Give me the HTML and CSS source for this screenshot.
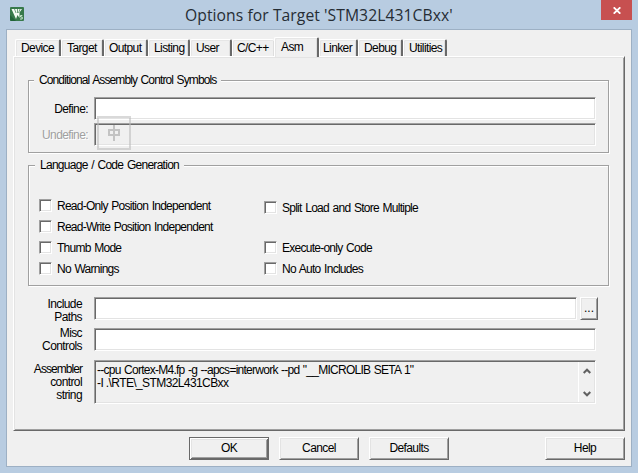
FILE: index.html
```html
<!DOCTYPE html>
<html lang="en">
<head>
<meta charset="utf-8">
<title>Options for Target</title>
<link rel="stylesheet" href="styles.css">
</head>
<body>
<div class="window">
  <header class="titlebar">
    <svg class="app-icon" width="14" height="14" viewBox="0 0 14 14"><rect width="14" height="14" rx="1" fill="#37794a"/><path d="M0 8L6 14H1L0 13Z" fill="#216338"/><path d="M1.5 2H12L9.5 5.5V11L7.5 8L6 12Z" fill="#f4fbf4"/><path d="M4.5 2L6 6M7.5 2V6M10 2L8.5 6" stroke="#37794a" stroke-width=".7"/><path d="M12.3 8.5H10.5V10H12.2V12H10" fill="none" stroke="#c9e7cd"/></svg>
    <h1>Options for Target 'STM32L431CBxx'</h1>
    <button class="close" aria-label="Close"><svg width="8" height="7" viewBox="0 0 8 7"><path d="M.7 .3L7.3 6.7M7.3 .3L.7 6.7" stroke="#fff" stroke-width="1.8"/></svg></button>
  </header>
  <main class="client">
    <nav class="tabs">
      <span class="tab device">Device</span><span class="tab target">Target</span><span class="tab output">Output</span><span class="tab listing">Listing</span><span class="tab user">User</span><span class="tab cpp">C/C++</span><span class="tab active">Asm</span><span class="tab linker">Linker</span><span class="tab debug">Debug</span><span class="tab utilities">Utilities</span>
    </nav>
    <section class="page">
      <fieldset class="group symbols">
        <legend>Conditional Assembly Control Symbols</legend>
        <div class="symbol-row"><label>Define:</label><div class="field"></div></div>
        <div class="symbol-row disabled"><label>Undefine:</label><div class="field"></div></div>
        <div class="ime"><svg width="14" height="18" viewBox="0 0 14 18"><path d="M2 6H12V11H2ZM7 1V17" fill="none" stroke="#c3c3c3" stroke-width="2"/></svg></div>
      </fieldset>
      <fieldset class="group language">
        <legend>Language / Code Generation</legend>
        <div class="checks">
          <div class="check"><i></i><span>Read-Only Position Independent</span></div>
          <div class="check split"><i></i><span>Split Load and Store Multiple</span></div>
          <div class="check wide"><i></i><span>Read-Write Position Independent</span></div>
          <div class="check"><i></i><span>Thumb Mode</span></div>
          <div class="check"><i></i><span>Execute-only Code</span></div>
          <div class="check"><i></i><span>No Warnings</span></div>
          <div class="check"><i></i><span>No Auto Includes</span></div>
        </div>
      </fieldset>
      <div class="row include"><label>Include<br>Paths</label><div class="field"></div><button class="button browse">...</button></div>
      <div class="row misc"><label>Misc<br>Controls</label><div class="field"></div></div>
      <div class="row assembler"><label><span class="tight">Assembler</span><br>control<br>string</label>
        <div class="field output-box"><div class="command"><div class="line1">--cpu Cortex-M4.fp -g --apcs=interwork --pd "__MICROLIB SETA 1"</div><div class="line2">-I .\RTE\_STM32L431CBxx</div></div>
          <div class="scroll"><svg width="8" height="6" viewBox="0 0 8 6"><path d="M.7 5L4 1.7L7.3 5" fill="none" stroke="#606060" stroke-width="2"/></svg><svg width="8" height="6" viewBox="0 0 8 6"><path d="M.7 1L4 4.3L7.3 1" fill="none" stroke="#606060" stroke-width="2"/></svg></div>
        </div>
      </div>
    </section>
    <footer class="actions">
      <button class="button default">OK</button><button class="button">Cancel</button><button class="button">Defaults</button><button class="button help">Help</button>
    </footer>
  </main>
</div>
</body>
</html>
```
FILE: styles.css
```css
* { box-sizing: border-box; }
body { margin: 0; background: #b8cce1; color: #000; font: 12px/13px "Liberation Sans", Arial, sans-serif; letter-spacing: -.6px; overflow: hidden; }
.window { width: 638px; height: 473px; padding: 0 6px 6px; }
.titlebar { height: 29px; display: flex; align-items: flex-start; }
.app-icon { margin: 7px 0 0 4px; flex: none; }
h1 { margin: 5px 0 0 161px; font: 15.7px/20px "Open Sans", sans-serif; letter-spacing: .06px; white-space: nowrap; color: #262d34; width: 300px; }
.close { margin-left: auto; margin-right: 0; width: 31px; height: 20px; background: #c75050; border: 0; padding: 0; display: grid; place-items: center; flex: none; }
.client { width: 626px; height: 438px; background: #f0f0f0; border: 1px solid #9db0c4; padding: 7px 6px 0; }
.tabs { height: 19px; display: flex; align-items: flex-end; padding-left: 2px; }
.tab { height: 17px; padding: 2px 0 0 5px; border-top: 1px solid #fff; border-left: 1px solid #fff; border-right: 2px solid #696969; border-radius: 2px 2px 0 0; box-shadow: inset 1px 1px #e6e6e6, inset -1px 0 #dedede; white-space: nowrap; }
.device { width: 46px; }
.target { width: 43px; }
.output { width: 44px; padding-left: 4px; }
.listing { width: 42px; }
.user { width: 42px; }
.cpp { width: 42px; border-right: 0; padding-left: 4px; }
.active { position: relative; width: 45px; height: 20px; margin-bottom: -1px; background: #f0f0f0; padding: 3px 0 0 6px; }
.linker { width: 39px; padding-left: 3px; }
.debug { width: 45px; }
.utilities { width: 44px; }
.page { width: 612px; height: 375px; border: 1px solid; border-color: #fff #696969 #696969 #fff; box-shadow: inset 1px 1px #e3e3e3, inset -1px -1px #a0a0a0; padding: 17px 14px; }
.group { position: relative; margin: 0; padding: 0; border: 0; width: 582px; }
.group::before { content: ""; position: absolute; inset: 6px 1px 1px 0; border: 1px solid #a0a0a0; box-shadow: 1px 1px #fff, inset 1px 1px #fff; }
.group legend { position: relative; float: left; margin-left: 6px; padding: 0 5px; background: #f0f0f0; height: 13px; white-space: nowrap; }
.symbols { height: 80px; padding-top: 0; }
.symbols legend { letter-spacing: -.88px; word-spacing: 1px; }
.language legend { letter-spacing: -.72px; word-spacing: 1px; margin-left: 7px; }
.symbol-row { clear: both; position: relative; display: flex; height: 26px; align-items: flex-start; top: 10px; }
.symbol-row label { width: 60px; text-align: right; padding-top: 6px; margin-right: 6px; }
.symbol-row .field { width: 502px; }
.disabled label { color: #a0a0a0; text-shadow: 1px 1px #fff; }
.disabled .field { background: #f0f0f0; }
.field { height: 23px; background: #fff; border: 1px solid; border-color: #a0a0a0 #fff #fff #a0a0a0; box-shadow: inset 1px 1px #696969, inset -1px -1px #e3e3e3; }
.ime { position: absolute; left: 69px; top: 42px; width: 34px; height: 34px; border: 2px solid rgba(185,185,185,.55); display: grid; place-items: center; }
.language { margin-top: 5px; height: 128px; }
.checks { clear: both; position: relative; display: grid; grid-template-columns: 225px 300px; grid-auto-rows: 21px; padding: 27px 0 0 11px; letter-spacing: -.74px; word-spacing: 1px; }
.check { display: flex; align-items: flex-start; white-space: nowrap; }
.check i { width: 13px; height: 13px; background: #fff; border: 1px solid; border-color: #a0a0a0 #fff #fff #a0a0a0; box-shadow: inset 1px 1px #696969, inset -1px -1px #e3e3e3; }
.check span { margin: 1px 0 0 5px; }
.split { padding-top: 2px; }
.wide { grid-column: 1 / 3; }
.row { display: flex; align-items: flex-start; }
.row label { width: 54px; text-align: right; padding-top: 1px; margin-right: 12px; flex: none; }
.row .field { width: 502px; flex: none; }
.include { margin-top: 10px; height: 31px; }
.include .field { width: 483px; }
.misc { height: 32px; }
.misc label { padding-top: 0; margin-top: -1px; }
.assembler label { padding-top: 3px; }
.tight { letter-spacing: -.95px; }
.row .output-box { height: 44px; background: #f0f0f0; display: flex; justify-content: space-between; padding: 1px; }
.command { padding: 2px 0 0 1px; white-space: pre; }
.line1 { letter-spacing: -.74px; word-spacing: .8px; }
.scroll { width: 17px; border-left: 1px solid #fff; display: flex; flex-direction: column; align-items: center; justify-content: space-between; padding: 6px 0 5px; margin-right: -1px; }
.button { font: inherit; letter-spacing: inherit; color: #000; padding: 0; width: 80px; height: 23px; background: #f0f0f0; border: 1px solid; border-color: #fff #696969 #696969 #fff; box-shadow: inset 1px 1px #e3e3e3, inset -1px -1px #a0a0a0; }
.browse { width: 18px; margin-left: 3px; letter-spacing: 0; }
.actions { display: flex; padding: 6px 0 0 176px; gap: 10px; }
.default { border-color: #696969; box-shadow: inset 1px 1px #fff, inset -1px -1px #696969, inset 2px 2px #e3e3e3, inset -2px -2px #a0a0a0; }
.help { margin-left: 86px; }
```
